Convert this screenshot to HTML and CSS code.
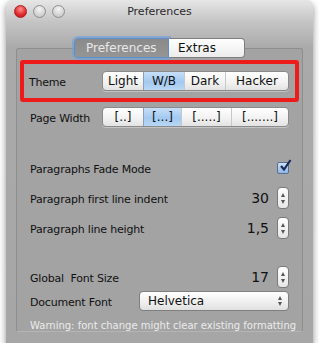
FILE: index.html
```html
<!DOCTYPE html>
<html lang="en">
<head>
  <meta charset="UTF-8">
  <title>Preferences</title>
  <link rel="stylesheet" href="styles.css">
</head>
<body>

  <div class="window">
    <div class="titlebar">
      <div class="lights">
        <span class="light red"></span>
        <span class="light"></span>
        <span class="light"></span>
      </div>
      <div class="title">Preferences</div>
    </div>

    <div class="tabs">
      <span class="tab active">Preferences</span>
      <span class="tab">Extras</span>
    </div>

    <div class="group">
      <div class="row theme-row">
        <span class="label">Theme</span>
        <div class="segmented">
          <span class="seg s-light">Light</span>
          <span class="seg s-wb selected">W/B</span>
          <span class="seg s-dark">Dark</span>
          <span class="seg s-hacker">Hacker</span>
        </div>
      </div>

      <div class="row width-row">
        <span class="label">Page Width</span>
        <div class="segmented">
          <span class="seg w1">[..]</span>
          <span class="seg w2 selected">[...]</span>
          <span class="seg w3">[.....]</span>
          <span class="seg w4">[.......]</span>
        </div>
      </div>

      <div class="row opt fade-row">
        <span class="label">Paragraphs Fade Mode</span>
        <span class="checkbox">
          <svg width="14" height="14" viewBox="0 0 14 14">
            <path d="M3 7 L6 10.5 L12.5 1" fill="none" stroke="#1a2a5a" stroke-width="2.2"/>
          </svg>
        </span>
      </div>

      <div class="row opt">
        <span class="label">Paragraph first line indent</span>
        <div class="value"><span>30</span><span class="stepper"><i class="up"></i><i class="down"></i></span></div>
      </div>

      <div class="row opt">
        <span class="label">Paragraph line height</span>
        <div class="value"><span>1,5</span><span class="stepper"><i class="up"></i><i class="down"></i></span></div>
      </div>

      <div class="row opt size-row">
        <span class="label">Global&nbsp; Font Size</span>
        <div class="value"><span>17</span><span class="stepper"><i class="up"></i><i class="down"></i></span></div>
      </div>

      <div class="row font-row">
        <span class="label">Document Font</span>
        <div class="popup">
          <span>Helvetica</span>
          <span class="arrows"><i class="up"></i><i class="down"></i></span>
        </div>
      </div>

      <div class="warning">Warning: font change might clear existing formatting</div>
    </div>
  </div>

</body>
</html>
```

FILE: styles.css
```css
* {
  margin: 0;
  padding: 0;
  box-sizing: border-box;
}

body {
  background: #ffffff;
  font-family: "DejaVu Sans", "Lucida Grande", sans-serif;
  font-size: 11px;
  color: #111;
}

.window {
  margin-left: 6px;
  width: 307px;
  height: 343px;
  border-radius: 5px 5px 0 0;
  background: linear-gradient(#e6e6e6 0px, #c4c4c4 22px, #aaaaaa 48px, #a6a6a6 100%);
  box-shadow: 0 4px 7px rgba(0, 0, 0, 0.45);
  display: flex;
  flex-direction: column;
}

.titlebar {
  height: 22px;
  display: flex;
  align-items: center;
  position: relative;
}

.lights {
  display: flex;
  gap: 6px;
  padding-left: 8px;
}

.light {
  width: 13px;
  height: 13px;
  border-radius: 50%;
  border: 1px solid #8f8f8f;
  background: radial-gradient(circle at 50% 30%, #f4f4f4, #bdbdbd);
}

.light.red {
  border-color: #a82020;
  background: radial-gradient(circle at 50% 30%, #ff8f8f, #e0282a 60%, #b81416);
}

.title {
  position: absolute;
  left: 0;
  right: 0;
  text-align: center;
  font-size: 11px;
  color: #2a2a2a;
  pointer-events: none;
}

.tabs {
  display: flex;
  justify-content: center;
  margin-top: 16px;
  margin-bottom: -10px;
  position: relative;
  z-index: 2;
}

.tab {
  height: 20px;
  line-height: 18px;
  font-size: 12px;
  padding: 0 9px;
  background: linear-gradient(#ffffff, #ececec);
  border: 1px solid #7f7f7f;
  border-left: none;
  border-radius: 0 4px 4px 0;
  width: 76px;
}

.tab.active {
  width: 95px;
  padding: 0 11px;
  color: #e8e8e8;
  background: linear-gradient(#8a8a8a, #959595);
  border: 1px solid #5d8fc8;
  border-radius: 4px 0 0 4px;
  box-shadow: 0 0 0 2px rgba(110, 160, 220, 0.65);
}

.group {
  margin: 0 10px;
  height: 284px;
  border: 1px solid #8e8e8e;
  border-bottom-color: #b4b4b4;
  border-radius: 3px;
  background: #a3a3a3;
  padding: 11px 13px 0 13px;
  display: flex;
  flex-direction: column;
}

.row {
  display: flex;
  align-items: center;
  justify-content: space-between;
}

.label {
  font-size: 11px;
  letter-spacing: -0.2px;
  padding-top: 2px;
}

.theme-row {
  margin: 0 -10px;
  height: 42px;
  border: 4px solid #ee1b1b;
  border-radius: 3px;
  padding: 0 6px 0 5px;
}

.width-row {
  margin-top: 5px;
  height: 20px;
}

.segmented {
  display: flex;
  height: 20px;
  border: 1px solid #8a8a8a;
  border-radius: 4px;
  background: linear-gradient(#ffffff, #f1f1f1 60%, #e2e2e2);
  overflow: hidden;
  box-shadow: 0 1px 0 rgba(255, 255, 255, 0.35);
}

.seg {
  font-size: 12px;
  line-height: 18px;
  text-align: center;
  border-left: 1px solid #c8c8c8;
}

.seg:first-child {
  border-left: none;
}

.seg.selected {
  background: linear-gradient(#c6dff7, #a3c9f0 55%, #b8d7f5);
  border-left-color: #8a9fb8;
}

.s-light { width: 40px; }
.s-wb { width: 41px; }
.s-dark { width: 41px; }
.s-hacker { width: 63px; }

.w1 { width: 40px; }
.w2 { width: 38px; }
.w3 { width: 50px; }
.w4 { width: 57px; }

.opt {
  height: 22px;
}

.fade-row {
  margin-top: 30px;
}

.opt + .opt {
  margin-top: 8px;
}

.opt.size-row {
  margin-top: 27px;
}

.checkbox {
  width: 12px;
  height: 12px;
  border: 1px solid #5a6f8e;
  border-radius: 2px;
  background: linear-gradient(#cfe2f7, #8fb7e6);
  position: relative;
}

.checkbox svg {
  position: absolute;
  left: 0;
  top: -4px;
}

.value {
  display: flex;
  align-items: center;
  gap: 8px;
  font-size: 14px;
}

.stepper {
  width: 12px;
  height: 22px;
  border: 1px solid #7a7a7a;
  border-radius: 4px;
  background: linear-gradient(#ffffff, #e6e6e6);
  display: flex;
  flex-direction: column;
  align-items: center;
  justify-content: space-around;
  padding: 3px 0;
}

.up,
.down {
  display: block;
  width: 0;
  height: 0;
  border-left: 2.5px solid transparent;
  border-right: 2.5px solid transparent;
}

.up {
  border-bottom: 4px solid #555;
}

.down {
  border-top: 4px solid #555;
}

.font-row {
  margin-top: 3px;
  height: 20px;
}

.popup {
  width: 150px;
  height: 20px;
  border: 1px solid #7f7f7f;
  border-radius: 4px;
  background: linear-gradient(#ffffff, #eeeeee 60%, #e0e0e0);
  display: flex;
  align-items: center;
  justify-content: space-between;
  padding: 0 6px 0 8px;
  font-size: 12px;
}

.arrows {
  display: flex;
  flex-direction: column;
  gap: 2px;
}

.warning {
  margin-top: 9px;
  font-size: 10px;
  color: #ebebeb;
  white-space: nowrap;
}
```
